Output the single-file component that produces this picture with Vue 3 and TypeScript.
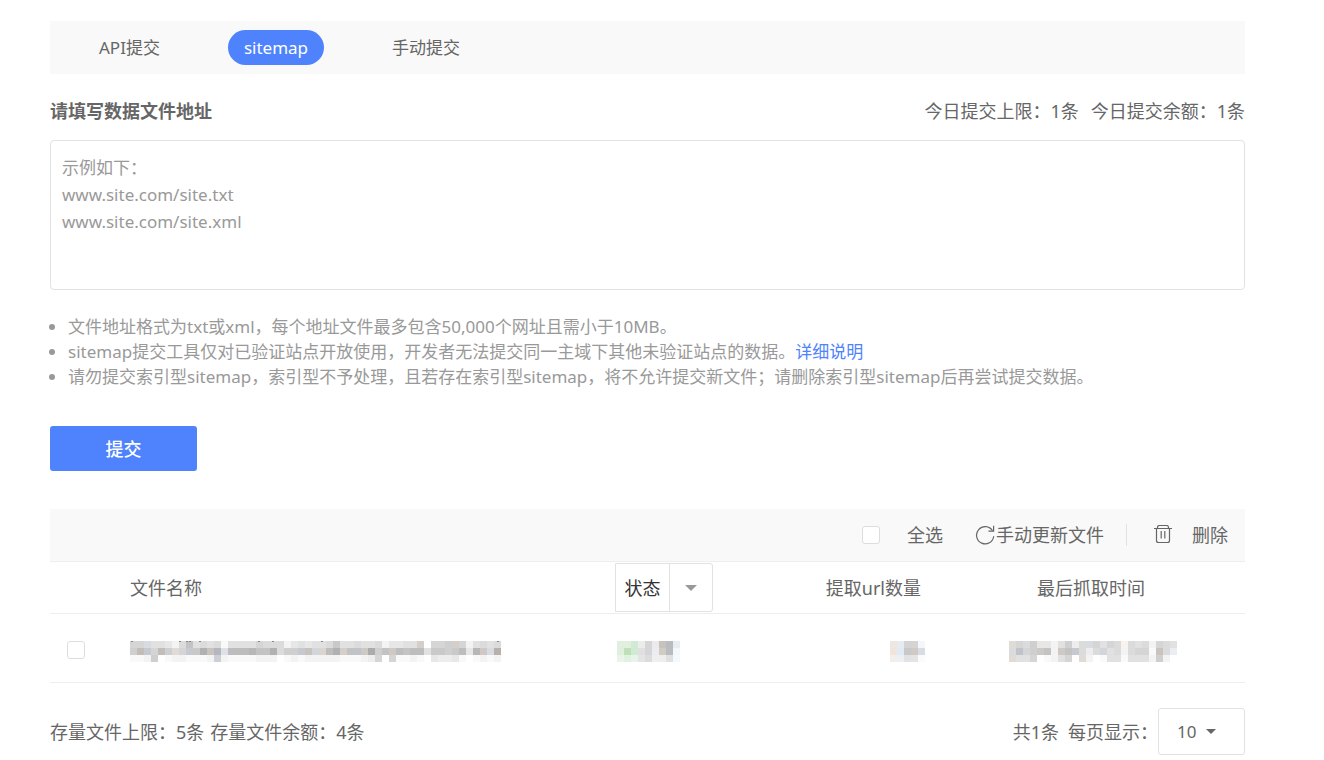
<script setup lang="ts">
import { computed, ref } from 'vue'

interface Cell {
  x: number
  y: number
  fill: string
}

const tabs = ['API提交', 'sitemap', '手动提交']
const activeTab = ref('sitemap')
const address = ref('')
const example = '示例如下：\nwww.site.com/site.txt\nwww.site.com/site.xml'
const rowChecked = ref(false)
const pageSize = ref('10')

const CELL = 7

// Each hex digit is a step away from white; the tint string warms (w) or cools (c) a cell.
function shade(rows: string[], tints: string[]): Cell[] {
  return rows.flatMap((row, r) =>
    [...row].map((digit, c) => {
      const level = 255 - parseInt(digit, 16) * 6
      const tint = tints[r]?.[c]
      const red = tint === 'w' ? Math.min(255, level + 6) : tint === 'c' ? level - 3 : level
      const blue = tint === 'c' ? Math.min(255, level + 6) : tint === 'w' ? level - 4 : level
      return { x: c * CELL, y: r * CELL, fill: `rgb(${red}, ${level}, ${blue})` }
    }),
  )
}

function paint(rows: string[]): Cell[] {
  return rows.flatMap((row, r) =>
    row.split(' ').map((hex, c) => ({ x: c * CELL, y: r * CELL, fill: `#${hex}` })),
  )
}

const nameCells = computed(() =>
  shade(
    [
      '77655426a565615555766624545' + '56955655624455807788725656',
      '8b97b86799dac5bbbcaad6889a7' + '7bd8aa9e8a9babb59989b4c96d',
      '112801221112821111222012122' + '22211123707112104334101212',
    ],
    [
      '..c......................................w....w.......',
      '.wc.w.w.c..wcc..........cwcw..w.cw...w............wcwc',
      '............c................',
    ],
  ),
)

const statusCells = paint([
  'e2efdf e2efdf d2e9d4 ebedeb d5d5d8 eceaea c6c3be b9bcbe e9edf2',
  'e0eedc bde0b4 d2e9d4 e0e0e0 d5d5d8 ecedf1 d0ccc4 b9bcbe f3f8fd',
  'eaf4e8 dff1e3 e8f3ea e4e4e4 dcdcdf efeff2 f0eeec e0e0e0 f4f9fe',
])

const countCells = paint([
  'ece7e3 e8eaf0 d3d3d3 d5d4d3 f3f6fb',
  'f1e5db dfeaf5 c8c8c8 d0c9c6 d8dde5',
  'f1eeeb ecf0f3 e2e2e2 e4e4e4 fbfbfb',
])

const timeCells = shade(
  ['676844258366757626562765', '6a789a29a963675626771a63', '655701257062015515552820'],
  ['w..........c....w.......', '.c..w..w.c...c.......w.c', 'w.........w.............'],
)
</script>

<template>
  <main class="page">
    <nav class="tabs">
      <button
        v-for="tab in tabs"
        :key="tab"
        type="button"
        class="tab"
        :class="{ active: tab === activeTab }"
        @click="activeTab = tab"
      >{{ tab }}</button>
    </nav>

    <div class="heading">
      <label class="title" for="address">请填写数据文件地址</label>
      <div class="quota">
        <span>今日提交上限：1条</span>
        <span>今日提交余额：1条</span>
      </div>
    </div>

    <textarea id="address" v-model="address" class="address" :placeholder="example"></textarea>

    <ul class="notes">
      <li>文件地址格式为txt或xml，每个地址文件最多包含50,000个网址且需小于10MB。</li>
      <li>sitemap提交工具仅对已验证站点开放使用，开发者无法提交同一主域下其他未验证站点的数据。<a href="#">详细说明</a></li>
      <li>请勿提交索引型sitemap，索引型不予处理，且若存在索引型sitemap，将不允许提交新文件；请删除索引型sitemap后再尝试提交数据。</li>
    </ul>

    <button type="button" class="submit">提交</button>

    <section class="files">
      <div class="toolbar">
        <label class="select-all">
          <input v-model="rowChecked" type="checkbox" class="check" />
          <span>全选</span>
        </label>
        <button type="button" class="tool refresh">
          <svg width="20" height="20" viewBox="0 0 20 20" fill="none" stroke="currentColor" stroke-width="1.2" aria-hidden="true">
            <path d="M18.7 11.2A8.6 8.6 0 1 1 17.5 5.8" />
            <path d="M18.6 .8V6.2H13.4" />
          </svg>
          <span>手动更新文件</span>
        </button>
        <span class="divider"></span>
        <button type="button" class="tool remove">
          <svg width="18" height="20" viewBox="0 0 18 20" fill="none" stroke="currentColor" stroke-width="1.2" aria-hidden="true">
            <path d="M0 3.5H18M3.5 3.5V2.5Q3.5 .5 5.5 .5H12.5Q14.5 .5 14.5 2.5V3.5" />
            <path d="M2.5 3.5V15.5Q2.5 17.5 4.5 17.5H13.5Q15.5 17.5 15.5 15.5V3.5" />
            <path d="M7.2 6V13.5M10.8 6V13.5" />
          </svg>
          <span>删除</span>
        </button>
      </div>

      <table class="table">
        <colgroup>
          <col class="col-check" />
          <col />
          <col class="col-status" />
          <col class="col-count" />
          <col class="col-time" />
        </colgroup>
        <thead>
          <tr>
            <th></th>
            <th>文件名称</th>
            <th>
              <div class="status">
                <button type="button" class="status-label">状态</button>
                <button type="button" class="status-toggle" aria-label="筛选状态">
                  <svg width="12" height="6" viewBox="0 0 12 6" aria-hidden="true"><path d="M0 0H12L6 6Z" fill="currentColor" /></svg>
                </button>
              </div>
            </th>
            <th class="count">提取url数量</th>
            <th class="time">最后抓取时间</th>
          </tr>
        </thead>
        <tbody>
          <tr>
            <td class="pick"><input v-model="rowChecked" type="checkbox" class="check" aria-label="选择文件" /></td>
            <td>
              <svg class="mosaic" width="371" height="21" viewBox="0 0 371 21" aria-hidden="true">
                <rect v-for="(c, i) in nameCells" :key="i" :x="c.x" :y="c.y" width="7" height="7" :fill="c.fill" />
                <path d="M1 0h2M49 0h2M56 0h2M59 0h2M69 0h2M128 0h2M142 0h2M191 0h2M367 0h2" stroke="#888" />
              </svg>
            </td>
            <td class="state">
              <svg class="mosaic" width="63" height="21" viewBox="0 0 63 21" aria-hidden="true">
                <rect v-for="(c, i) in statusCells" :key="i" :x="c.x" :y="c.y" width="7" height="7" :fill="c.fill" />
              </svg>
            </td>
            <td class="count">
              <svg class="mosaic" width="35" height="21" viewBox="0 0 35 21" aria-hidden="true">
                <rect v-for="(c, i) in countCells" :key="i" :x="c.x" :y="c.y" width="7" height="7" :fill="c.fill" />
              </svg>
            </td>
            <td class="time">
              <svg class="mosaic" width="168" height="21" viewBox="0 0 168 21" aria-hidden="true">
                <rect v-for="(c, i) in timeCells" :key="i" :x="c.x" :y="c.y" width="7" height="7" :fill="c.fill" />
              </svg>
            </td>
          </tr>
        </tbody>
      </table>
    </section>

    <footer class="footer">
      <div class="stock">
        <span>存量文件上限：5条</span>
        <span>存量文件余额：4条</span>
      </div>
      <div class="pager">
        <span>共1条</span>
        <label for="size">每页显示：</label>
        <div class="size">
          <select id="size" v-model="pageSize">
            <option>10</option>
            <option>20</option>
            <option>50</option>
          </select>
          <svg class="caret" width="10" height="5" viewBox="0 0 10 5" aria-hidden="true"><path d="M0 0H10L5 5Z" fill="currentColor" /></svg>
        </div>
      </div>
    </footer>
  </main>
</template>

<style>
body {
  background: #fff;
}
</style>

<style scoped>
.page {
  padding: 21px 79px 0 50px;
  color: #666;
  font-family: "Noto Sans", "Noto Sans CJK SC", sans-serif;
  font-size: 18px;
  line-height: 26px;
}

.page * {
  box-sizing: border-box;
}

button,
textarea,
select {
  font: inherit;
  color: inherit;
}

button {
  padding: 0;
  border: 0;
  background: none;
  cursor: pointer;
}

.tabs {
  display: flex;
  align-items: center;
  gap: 52px;
  height: 53px;
  padding: 0 33px;
  background: #f9f9f9;
}

.tab {
  height: 35px;
  padding: 0 16px;
  border-radius: 18px;
  font-size: 17px;
}

.tab.active {
  background: #4e83fd;
  color: #fff;
}

.heading {
  display: flex;
  justify-content: space-between;
  align-items: center;
  height: 66px;
  padding-top: 8px;
}

.title {
  font-weight: 700;
}

.quota {
  display: flex;
  gap: 12px;
}

.address {
  display: block;
  width: 100%;
  height: 150px;
  padding: 13px 11px;
  border: 1px solid #e2e2e2;
  border-radius: 4px;
  outline: 0;
  resize: none;
  font-size: 17px;
  line-height: 27px;
}

.address::placeholder {
  color: #999;
  opacity: 1;
}

.notes {
  margin: 24px 0 0;
  padding-left: 18px;
  color: #999;
  font-size: 17px;
  line-height: 25px;
}

.notes a {
  color: #4e83fd;
  text-decoration: none;
}

.submit {
  display: block;
  width: 147px;
  height: 45px;
  margin-top: 37px;
  border-radius: 3px;
  background: #4e83fd;
  color: #fff;
  font-weight: 500;
}

.files {
  margin-top: 38px;
}

.toolbar {
  display: flex;
  justify-content: flex-end;
  align-items: center;
  height: 52px;
  padding-right: 17px;
  background: #f9f9f9;
}

.check {
  appearance: none;
  width: 18px;
  height: 18px;
  margin: 0;
  border: 1px solid #ddd;
  border-radius: 3px;
  background: #fff;
}

.check:checked {
  background: #4e83fd;
}

.select-all,
.tool {
  display: flex;
  align-items: center;
}

.select-all {
  gap: 27px;
}

.refresh {
  gap: 1px;
  margin-left: 32px;
}

.divider {
  width: 1px;
  height: 22px;
  margin: 0 27px 0 22px;
  background: #e2e2e2;
}

.remove {
  gap: 20px;
}

.table {
  width: 100%;
  table-layout: fixed;
  border-collapse: collapse;
}

.col-check {
  width: 80px;
}

.col-status {
  width: 190px;
}

.col-count {
  width: 132px;
}

.col-time {
  width: 308px;
}

.table tr {
  border-bottom: 1px solid #eee;
}

.table thead tr {
  border-top: 1px solid #eee;
}

.table th {
  height: 52px;
  padding: 0;
  font-weight: 400;
  text-align: left;
}

.table td {
  height: 69px;
  padding: 3px 0 0;
}

.table td.pick {
  padding: 0 0 0 17px;
}

.table td.state {
  padding-left: 2px;
}

.table .count {
  padding-right: 12px;
  text-align: right;
}

.table th.count {
  padding-right: 16px;
}

.table .time {
  text-align: center;
}

.table td.time {
  padding-left: 4px;
}

.pick .check,
.mosaic {
  display: inline-block;
  vertical-align: middle;
}

.mosaic {
  shape-rendering: crispEdges;
}

.status {
  display: inline-flex;
  height: 49px;
  border: 1px solid #e2e2e2;
  border-radius: 0 3px 3px 0;
  vertical-align: middle;
}

.status-label {
  width: 54px;
  border-right: 1px solid #e2e2e2;
  color: #333;
}

.status-toggle {
  display: flex;
  align-items: center;
  justify-content: center;
  width: 42px;
  color: #999;
}

.footer {
  display: flex;
  justify-content: space-between;
  align-items: center;
  margin-top: 25px;
}

.stock,
.pager {
  display: flex;
  align-items: center;
  gap: 6px;
}

.pager {
  gap: 9px;
}

.pager label {
  margin-right: -9px;
}

.size {
  position: relative;
}

.size select {
  display: block;
  appearance: none;
  width: 87px;
  height: 47px;
  padding: 0 18px;
  border: 1px solid #e2e2e2;
  border-radius: 3px;
  background: #fff;
  font-size: 17px;
}

.caret {
  position: absolute;
  top: 21px;
  right: 29px;
  pointer-events: none;
}
</style>
